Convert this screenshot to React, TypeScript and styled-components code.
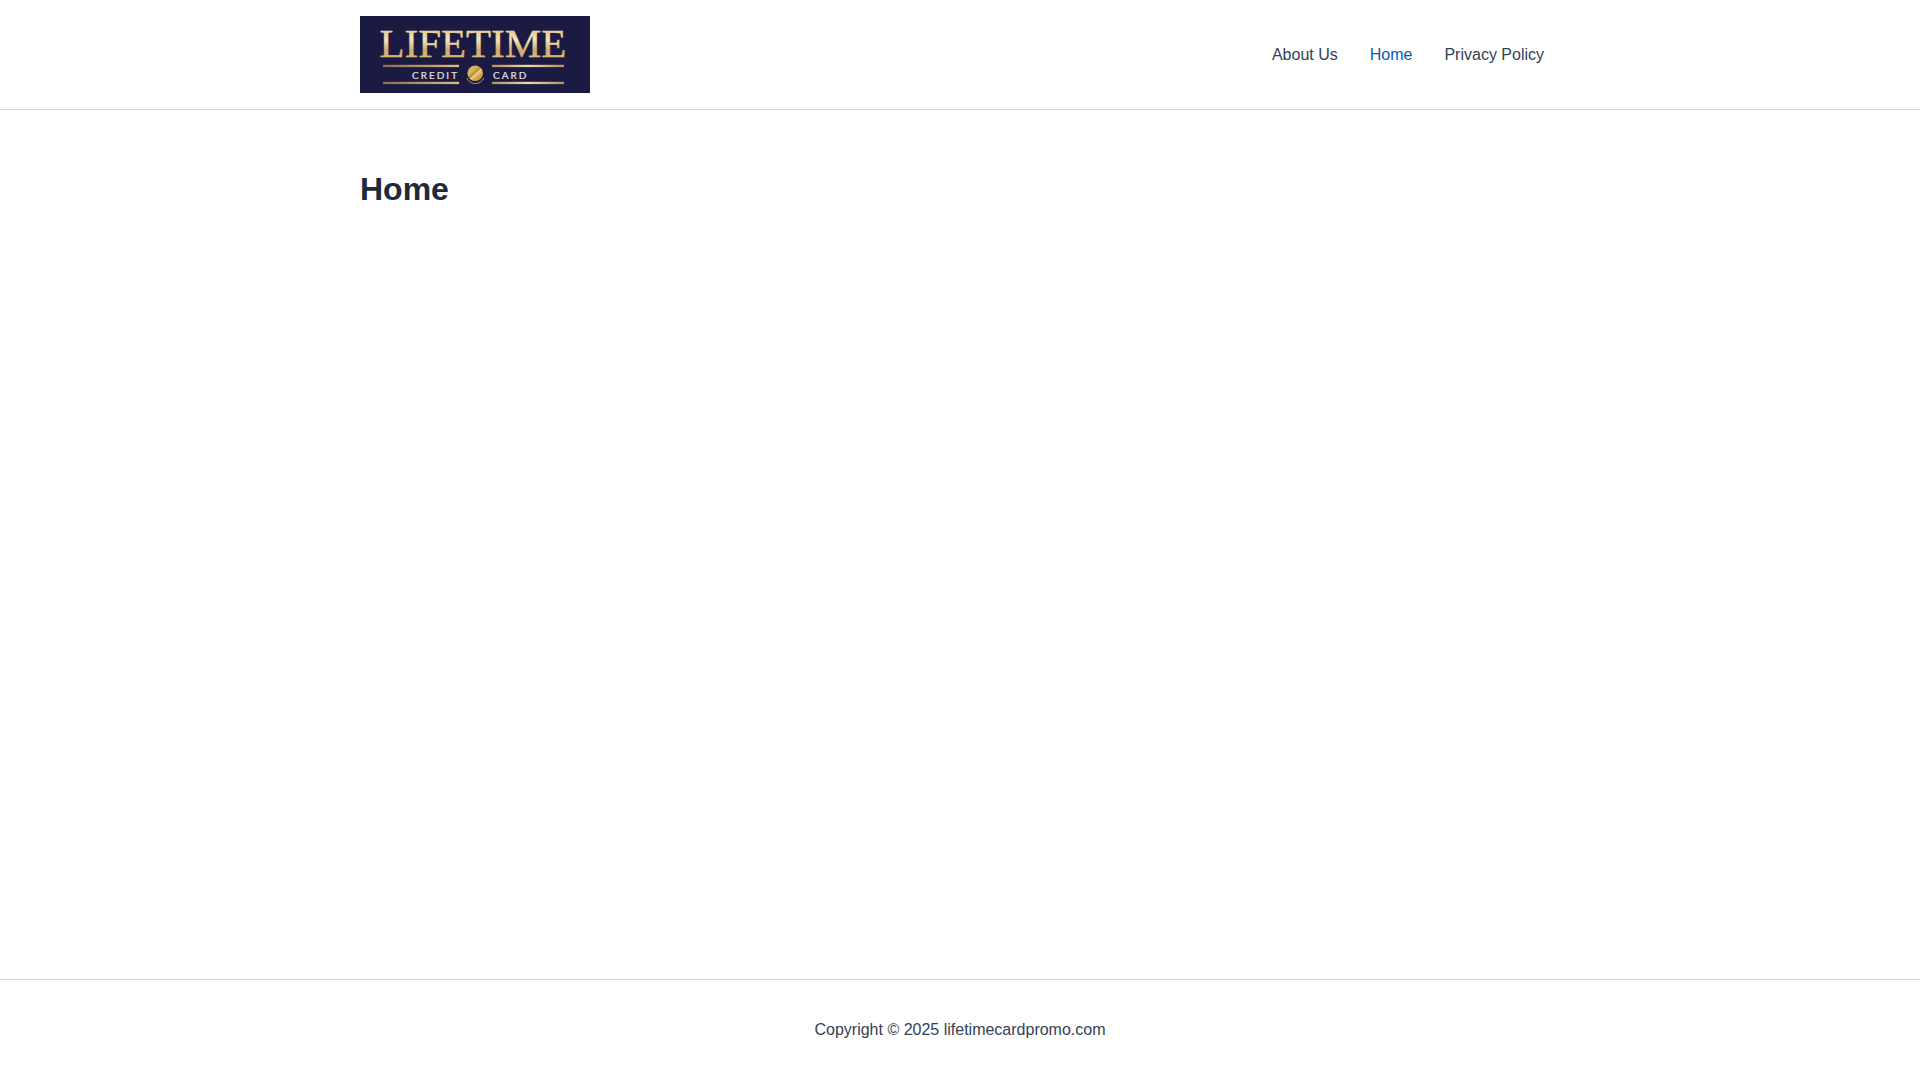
import React from "react";
import styled, { createGlobalStyle } from "styled-components";

const GlobalStyle = createGlobalStyle`
  *, *::before, *::after { box-sizing: border-box; }
  body {
    margin: 0;
    background: #ffffff;
    color: #334155;
    font-family: Arial, "Liberation Sans", sans-serif;
    font-size: 16px;
    line-height: 26px;
  }
`;

const Page = styled.div`
  display: flex;
  flex-direction: column;
  min-height: 100vh;
`;

const Container = styled.div`
  width: 100%;
  max-width: 1240px;
  margin: 0 auto;
  padding: 0 20px;
`;

const Header = styled.header`
  border-bottom: 1px solid #cfd1d6;
`;

const HeaderRow = styled(Container)`
  display: flex;
  align-items: center;
  justify-content: space-between;
  padding-top: 16px;
  padding-bottom: 16px;
`;

const LogoLink = styled.a`
  display: block;
`;

const LogoArt = styled.svg`
  display: block;
  width: 230px;
  height: 77px;
`;

const Menu = styled.ul`
  display: flex;
  margin: 0;
  padding: 0;
  list-style: none;
`;

const MenuLink = styled.a<{ $current?: boolean }>`
  display: block;
  padding: 0 16px;
  color: ${(p) => (p.$current ? "#045cb4" : "#334155")};
  text-decoration: none;

  &:hover { color: #045cb4; }
`;

const Main = styled.main`
  flex: 1;
`;

const Article = styled(Container)`
  padding-top: 56px;
`;

const Title = styled.h1`
  margin: 0;
  color: #1e293b;
  font-size: 32px;
  font-weight: 700;
  line-height: 47px;
`;

const Footer = styled.footer`
  border-top: 1px solid #cfd1d6;
`;

const Copyright = styled.p`
  margin: 0;
  padding: 37px 20px;
  text-align: center;
`;

function Logo() {
  return (
    <LogoArt viewBox="0 0 230 77" role="img" aria-label="Lifetime Credit Card">
      <defs>
        <linearGradient id="letters" x1="0" y1="13" x2="0" y2="41" gradientUnits="userSpaceOnUse">
          <stop offset="0" stopColor="#e3c996" />
          <stop offset="0.4" stopColor="#f4e3b9" />
          <stop offset="0.75" stopColor="#cfac6c" />
          <stop offset="1" stopColor="#dcb876" />
        </linearGradient>
        <linearGradient id="leftRule" x1="23" y1="0" x2="99" y2="0" gradientUnits="userSpaceOnUse">
          <stop offset="0" stopColor="#8f6c50" />
          <stop offset="0.6" stopColor="#c09a68" />
          <stop offset="1" stopColor="#dcc08a" />
        </linearGradient>
        <linearGradient id="rightRule" x1="132" y1="0" x2="204" y2="0" gradientUnits="userSpaceOnUse">
          <stop offset="0" stopColor="#b98e58" />
          <stop offset="0.5" stopColor="#f0d9a6" />
          <stop offset="1" stopColor="#b98f5c" />
        </linearGradient>
        <linearGradient id="coin" x1="108" y1="50" x2="122" y2="65" gradientUnits="userSpaceOnUse">
          <stop offset="0" stopColor="#c7a04c" />
          <stop offset="0.3" stopColor="#d9b765" />
          <stop offset="0.5" stopColor="#b68b3b" />
          <stop offset="0.53" stopColor="#efd48a" />
          <stop offset="0.7" stopColor="#d2a950" />
          <stop offset="1" stopColor="#b8893c" />
        </linearGradient>
      </defs>
      <rect width="230" height="77" fill="#1b1a42" />
      <text
        x="19.5"
        y="40.7"
        fill="url(#letters)"
        stroke="url(#letters)"
        strokeWidth="0.4"
        fontFamily="'Liberation Serif', serif"
        fontSize="41"
      >
        LIFETIME
      </text>
      <rect x="23" y="48.8" width="76" height="2.3" fill="url(#leftRule)" />
      <rect x="23" y="65.8" width="76" height="2.3" fill="url(#leftRule)" />
      <rect x="132" y="48.8" width="72" height="2.3" fill="url(#rightRule)" />
      <rect x="132" y="65.8" width="72" height="2.3" fill="url(#rightRule)" />
      <g
        fill="#e2e0ee"
        stroke="#e2e0ee"
        strokeWidth="0.2"
        fontFamily="Lato, sans-serif"
        fontSize="10"
        letterSpacing="2"
      >
        <text x="52" y="62.5">CREDIT</text>
        <text x="133" y="62.5">CARD</text>
      </g>
      <circle cx="115.2" cy="57.3" r="7.8" fill="url(#coin)" />
      <path d="M106.8 62 Q109.5 67.4 115.3 67.6 Q121 67.4 123.8 62" fill="none" stroke="#b59a68" strokeWidth="1" />
    </LogoArt>
  );
}

const menu = [
  { label: "About Us", href: "#about-us" },
  { label: "Home", href: "#home", current: true },
  { label: "Privacy Policy", href: "#privacy-policy" },
];

export default function App() {
  return (
    <Page>
      <GlobalStyle />
      <Header>
        <HeaderRow>
          <LogoLink href="#home">
            <Logo />
          </LogoLink>
          <nav aria-label="Primary">
            <Menu>
              {menu.map((item) => (
                <li key={item.label}>
                  <MenuLink
                    href={item.href}
                    $current={item.current}
                    aria-current={item.current ? "page" : undefined}
                  >
                    {item.label}
                  </MenuLink>
                </li>
              ))}
            </Menu>
          </nav>
        </HeaderRow>
      </Header>
      <Main>
        <Article>
          <Title>Home</Title>
        </Article>
      </Main>
      <Footer>
        <Copyright>Copyright © 2025 lifetimecardpromo.com</Copyright>
      </Footer>
    </Page>
  );
}
